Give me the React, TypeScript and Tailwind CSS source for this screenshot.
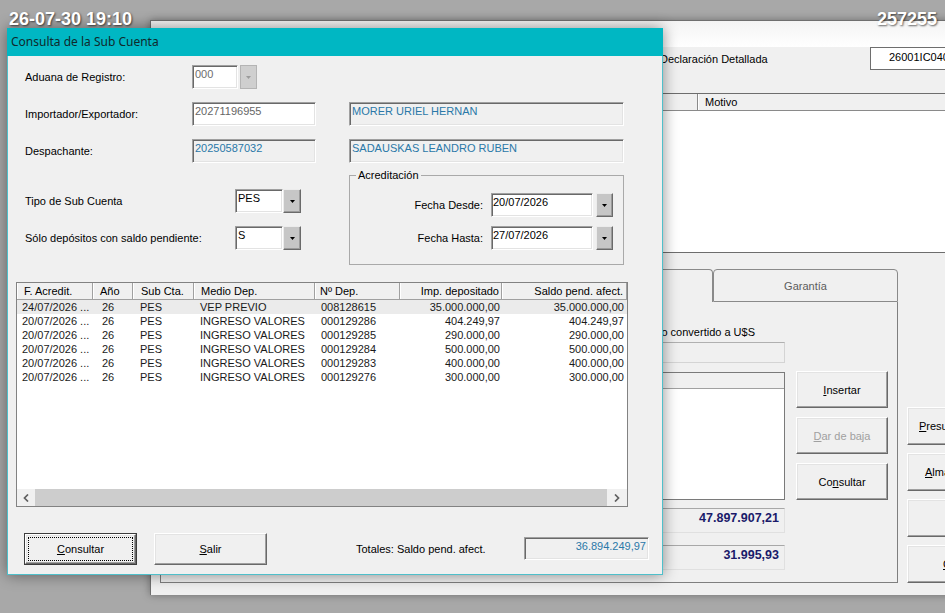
import React from 'react';

const raised =
  "border border-t-white border-l-white border-r-[#696969] border-b-[#696969] shadow-[inset_-1px_-1px_0_#a0a0a0,inset_1px_1px_0_#e3e3e3] bg-[#f0f0f0]";
const sunken =
  "border border-t-[#a0a0a0] border-l-[#a0a0a0] border-r-white border-b-white shadow-[inset_1px_1px_0_#696969,inset_-1px_-1px_0_#e3e3e3]";
const dropBtn =
  "flex items-center justify-center bg-[#c6c6c6] border border-t-[#ececec] border-l-[#ececec] border-r-[#6a6a6a] border-b-[#6a6a6a] shadow-[inset_-1px_-1px_0_#9a9a9a]";

const rows = [
  ['24/07/2026 ...', '26', 'PES', 'VEP PREVIO', '008128615', '35.000.000,00', '35.000.000,00'],
  ['20/07/2026 ...', '26', 'PES', 'INGRESO VALORES', '000129286', '404.249,97', '404.249,97'],
  ['20/07/2026 ...', '26', 'PES', 'INGRESO VALORES', '000129285', '290.000,00', '290.000,00'],
  ['20/07/2026 ...', '26', 'PES', 'INGRESO VALORES', '000129284', '500.000,00', '500.000,00'],
  ['20/07/2026 ...', '26', 'PES', 'INGRESO VALORES', '000129283', '400.000,00', '400.000,00'],
  ['20/07/2026 ...', '26', 'PES', 'INGRESO VALORES', '000129276', '300.000,00', '300.000,00'],
];

const headers = [
  { label: 'F. Acredit.', head: 'pl-[6px]', cell: 'pl-[5px]' },
  { label: 'Año', head: 'pl-[6px]', cell: 'pl-[9px]' },
  { label: 'Sub Cta.', head: 'pl-[7px]', cell: 'pl-[7px]' },
  { label: 'Medio Dep.', head: 'pl-[6px]', cell: 'pl-[6px]' },
  { label: 'Nº Dep.', head: 'pl-[4px]', cell: 'pl-[6px]' },
  { label: 'Imp. depositado', head: 'justify-end pr-[2px]', cell: 'text-right pr-[2px]' },
  { label: 'Saldo pend. afect.', head: 'justify-end pr-[3px]', cell: 'text-right pr-[3px]' },
];

const Arrow = ({ color = '#000' }: { color?: string }) => (
  <svg width="5" height="3" viewBox="0 0 5 3">
    <path d="M0 0h5L2.5 3z" fill={color} />
  </svg>
);

const Chevron = ({ right }: { right?: boolean }) => (
  <svg width="6" height="8" viewBox="0 0 6 8">
    <path
      d={right ? 'M1 0.5L4.5 4L1 7.5' : 'M5 0.5L1.5 4L5 7.5'}
      stroke="#5f5f5f"
      strokeWidth="1.7"
      fill="none"
    />
  </svg>
);

const Combo = ({ value, w, btn }: { value: string; w: string; btn: string }) => (
  <div className="flex h-full">
    <div className={`${sunken} ${w} bg-white pl-[2px] pt-[1px]`}>{value}</div>
    <div className={`${dropBtn} ${btn} h-full`}>
      <Arrow />
    </div>
  </div>
);

function Modal() {
  return (
    <div className="absolute left-[7px] top-[28px] z-10 flex h-[547px] w-[656px] flex-col border border-t-0 border-[#4fbfca] bg-[#f0f0f0] shadow-[0_0_14px_rgba(0,0,0,0.45)]">
      <div className="-mx-[1px] flex h-[28px] items-center bg-[#00b7c3] pl-[4px] font-['Noto_Sans',sans-serif] text-[12px] text-[#10292c]">
        Consulta de la Sub Cuenta
      </div>

      {/* Aduana */}
      <div className="mt-[9px] flex h-[24px] items-center">
        <div className="w-[184px] pl-[17px]">Aduana de Registro:</div>
        <div className="flex h-full">
          <div className={`${sunken} w-[46px] bg-white pl-[2px] pt-[1px] text-[#6d6d6d]`}>000</div>
          <div className="ml-[2px] flex h-full w-[17px] items-center justify-center border border-[#b4b4b4] bg-[#cfcfcf]">
            <Arrow color="#9b9b9b" />
          </div>
        </div>
      </div>

      {/* Importador */}
      <div className="mt-[13px] flex h-[24px] items-center">
        <div className="w-[184px] pl-[17px]">Importador/Exportador:</div>
        <div className={`${sunken} h-full w-[124px] bg-white pl-[2px] pt-[1px] text-[#666]`}>20271196955</div>
        <div className={`${sunken} ml-[33px] h-full w-[275px] pl-[2px] pt-[1px] text-[#2a78a8]`}>MORER URIEL HERNAN</div>
      </div>

      {/* Despachante */}
      <div className="mt-[13px] flex h-[24px] items-center">
        <div className="w-[184px] pl-[17px]">Despachante:</div>
        <div className={`${sunken} h-full w-[124px] pl-[2px] pt-[1px] text-[#2a78a8]`}>20250587032</div>
        <div className={`${sunken} ml-[33px] h-full w-[275px] pl-[2px] pt-[1px] text-[#2a78a8]`}>SADAUSKAS LEANDRO RUBEN</div>
      </div>

      {/* Filtros */}
      <div className="mt-[12px] flex h-[90px]">
        <div className="flex w-[341px] flex-col">
          <div className="mt-[14px] flex h-[24px] items-center">
            <div className="w-[227px] pl-[17px]">Tipo de Sub Cuenta</div>
            <Combo value="PES" w="w-[48px]" btn="w-[18px]" />
          </div>
          <div className="mt-[13px] flex h-[24px] items-center">
            <div className="w-[227px] pl-[17px]">Sólo depósitos con saldo pendiente:</div>
            <Combo value="S" w="w-[48px]" btn="w-[18px]" />
          </div>
        </div>
        <div className="relative flex h-[90px] w-[275px] flex-col border border-[#a9a9a9]">
          <div className="absolute -top-[8px] left-[6px] bg-[#f0f0f0] px-[2px]">Acreditación</div>
          <div className="mt-[17px] flex h-[24px] items-center">
            <div className="w-[133px] text-right">Fecha Desde:</div>
            <div className="ml-[8px] flex h-full">
              <div className={`${sunken} w-[102px] bg-white pl-[1px] pt-[1px]`}>20/07/2026</div>
              <div className={`${dropBtn} ml-[3px] h-full w-[17px]`}>
                <Arrow />
              </div>
            </div>
          </div>
          <div className="mt-[9px] flex h-[24px] items-center">
            <div className="w-[133px] text-right">Fecha Hasta:</div>
            <div className="ml-[8px] flex h-full">
              <div className={`${sunken} w-[102px] bg-white pl-[1px] pt-[1px]`}>27/07/2026</div>
              <div className={`${dropBtn} ml-[3px] h-full w-[17px]`}>
                <Arrow />
              </div>
            </div>
          </div>
        </div>
      </div>

      {/* Tabla */}
      <div className="ml-[8px] mt-[17px] flex h-[225px] w-[612px] flex-col border border-[#828282] bg-white">
        <div className="grid h-[17px] grid-cols-[76px_40px_61px_121px_85px_102px_125px] border-b border-[#a0a0a0] bg-[#f0f0f0]">
          {headers.map((h) => (
            <div
              key={h.label}
              className={`flex h-full items-center border-l border-r border-l-white border-r-[#a0a0a0] ${h.head}`}
            >
              {h.label}
            </div>
          ))}
        </div>
        {rows.map((r, i) => (
          <div
            key={i}
            className={`grid h-[14px] grid-cols-[76px_40px_61px_121px_85px_102px_125px] text-[#1a1a1a] ${
              i === 0 ? 'bg-[#ebebeb]' : 'bg-white'
            }`}
          >
            {r.map((c, j) => (
              <div key={j} className={`whitespace-nowrap leading-[14px] ${headers[j].cell}`}>
                {c}
              </div>
            ))}
          </div>
        ))}
        <div className="flex-1" />
        <div className="flex h-[17px] bg-[#f0f0f0]">
          <div className="flex w-[18px] items-center justify-center">
            <Chevron />
          </div>
          <div className="flex-1 bg-[#cdcdcd]" />
          <div className="flex w-[20px] items-center justify-center">
            <Chevron right />
          </div>
        </div>
      </div>

      {/* Pie */}
      <div className="mt-[26px] flex h-[32px] items-start">
        <div className="ml-[16px] flex h-[32px] w-[113px] border border-[#3c3c3c]">
          <div className={`${raised} flex flex-1 p-[2px]`}>
            <div className="flex flex-1 items-center justify-center border border-dotted border-black">
              <span>
                <u>C</u>onsultar
              </span>
            </div>
          </div>
        </div>
        <div className={`${raised} ml-[17px] flex h-[32px] w-[113px] items-center justify-center`}>
          <span>
            <u>S</u>alir
          </span>
        </div>
        <div className="ml-[89px] flex h-[32px] w-[168px] items-center">Totales: Saldo pend. afect.</div>
        <div className={`${sunken} mt-[4px] h-[23px] w-[125px] pr-[2px] pt-[1px] text-right text-[#2a78a8]`}>
          36.894.249,97
        </div>
      </div>
    </div>
  );
}

function BackWindow() {
  const sideBtn = `${raised} h-[38px] w-[92px] shrink-0 text-left whitespace-nowrap`;
  return (
    <div className="absolute left-[150px] top-[20px] z-0 flex h-[575px] w-[880px] flex-col border-l border-t border-[#6f6f6f] bg-[#f0f0f0] shadow-[0_0_8px_rgba(0,0,0,0.35)]">
      <div className="h-[26px] bg-gradient-to-b from-[#f4f4f4] to-white" />
      <div className="flex h-[23px] items-center">
        <div className="w-[719px] shrink-0 pl-[509px]">Declaración Detallada</div>
        <div className="h-[23px] w-[110px] shrink-0 whitespace-nowrap border border-[#6e6e6e] bg-white pl-[18px] pt-[2px]">
          26001IC04000512K
        </div>
      </div>

      <div className="ml-[9px] mt-[23px] flex h-[160px] flex-col border-y border-[#6d6d6d]">
        <div className="flex h-[17px] border-b border-[#8a8a8a]">
          <div className="w-[538px] shrink-0 border-r border-[#8a8a8a]" />
          <div className="flex items-center border-l border-white pl-[6px]">Motivo</div>
        </div>
        <div className="flex-1 bg-white" />
      </div>

      <div className="mt-[16px] flex">
        <div className="ml-[9px] flex w-[738px] shrink-0 flex-col">
          <div className="flex h-[33px]">
            <div className="ml-[10px] w-[543px] shrink-0 rounded-t-[4px] border-x border-t border-[#8a8a8a]" />
            <div className="flex w-[185px] shrink-0 items-center justify-center rounded-t-[4px] border border-[#8a8a8a] text-[#5c5c5c]">
              Garantía
            </div>
          </div>
          <div className="flex h-[281px] border-x border-b border-[#7f7f7f]">
            <div className="flex w-[624px] shrink-0 flex-col">
              <div className="mt-[22px] h-[16px] w-[594px] text-right leading-[16px]">Saldo convertido a U$S</div>
              <div className="mt-[2px] h-[21px] border border-[#d4d4d4] border-t-[#b0b0b0]" />
              <div className="mt-[9px] flex h-[128px] flex-col border border-[#7a7a7a] bg-white">
                <div className="h-[16px] border-b border-[#a0a0a0] bg-[#f0f0f0]" />
              </div>
              <div className="mt-[8px] h-[25px] border border-[#e0e0e0] border-t-[#a8a8a8] pr-[5px] pt-[2px] text-right text-[12.5px] font-bold text-[#1a1a6a]">
                47.897.907,21
              </div>
              <div className="mt-[12px] h-[25px] border border-[#e0e0e0] border-t-[#a8a8a8] pr-[5px] pt-[2px] text-right text-[12.5px] font-bold text-[#1a1a6a]">
                31.995,93
              </div>
            </div>
            <div className="ml-[11px] flex w-[92px] shrink-0 flex-col">
              <div className={`${raised} mt-[69px] flex h-[37px] items-center justify-center`}>
                <span>
                  <u>I</u>nsertar
                </span>
              </div>
              <div className={`${raised} mt-[9px] flex h-[37px] items-center justify-center text-[#a0a0a0]`}>
                <span>
                  <u>D</u>ar de baja
                </span>
              </div>
              <div className={`${raised} mt-[9px] flex h-[37px] items-center justify-center`}>
                <span>
                  Co<u>n</u>sultar
                </span>
              </div>
            </div>
          </div>
        </div>
        <div className="ml-[9px] mt-[138px] flex w-[92px] shrink-0 flex-col gap-[8px]">
          <div className={`${sideBtn} flex items-center pl-[11px]`}>
            <span>
              <u>P</u>resupuestar
            </span>
          </div>
          <div className={`${sideBtn} flex items-center pl-[17px]`}>
            <span>
              <u>A</u>lmacenar
            </span>
          </div>
          <div className={`${sideBtn}`} />
          <div className={`${sideBtn} flex items-center pl-[35px]`}>
            <span>
              <u>C</u>errar
            </span>
          </div>
        </div>
      </div>
    </div>
  );
}

export default function App() {
  return (
    <div className="relative h-[613px] w-[945px] overflow-hidden bg-[#a8a8a8] font-['Liberation_Sans',Arial,sans-serif] text-[11px] leading-[14px] text-black">
      <BackWindow />
      <Modal />
      <div className="absolute left-[9px] top-[8px] z-20 text-[18px] font-bold leading-[22px] text-white [text-shadow:1px_1px_2px_rgba(0,0,0,0.6)]">
        26-07-30 19:10
      </div>
      <div className="absolute right-[8px] top-[8px] z-20 text-[18px] font-bold leading-[22px] text-white [text-shadow:1px_1px_2px_rgba(0,0,0,0.6)]">
        257255
      </div>
    </div>
  );
}
